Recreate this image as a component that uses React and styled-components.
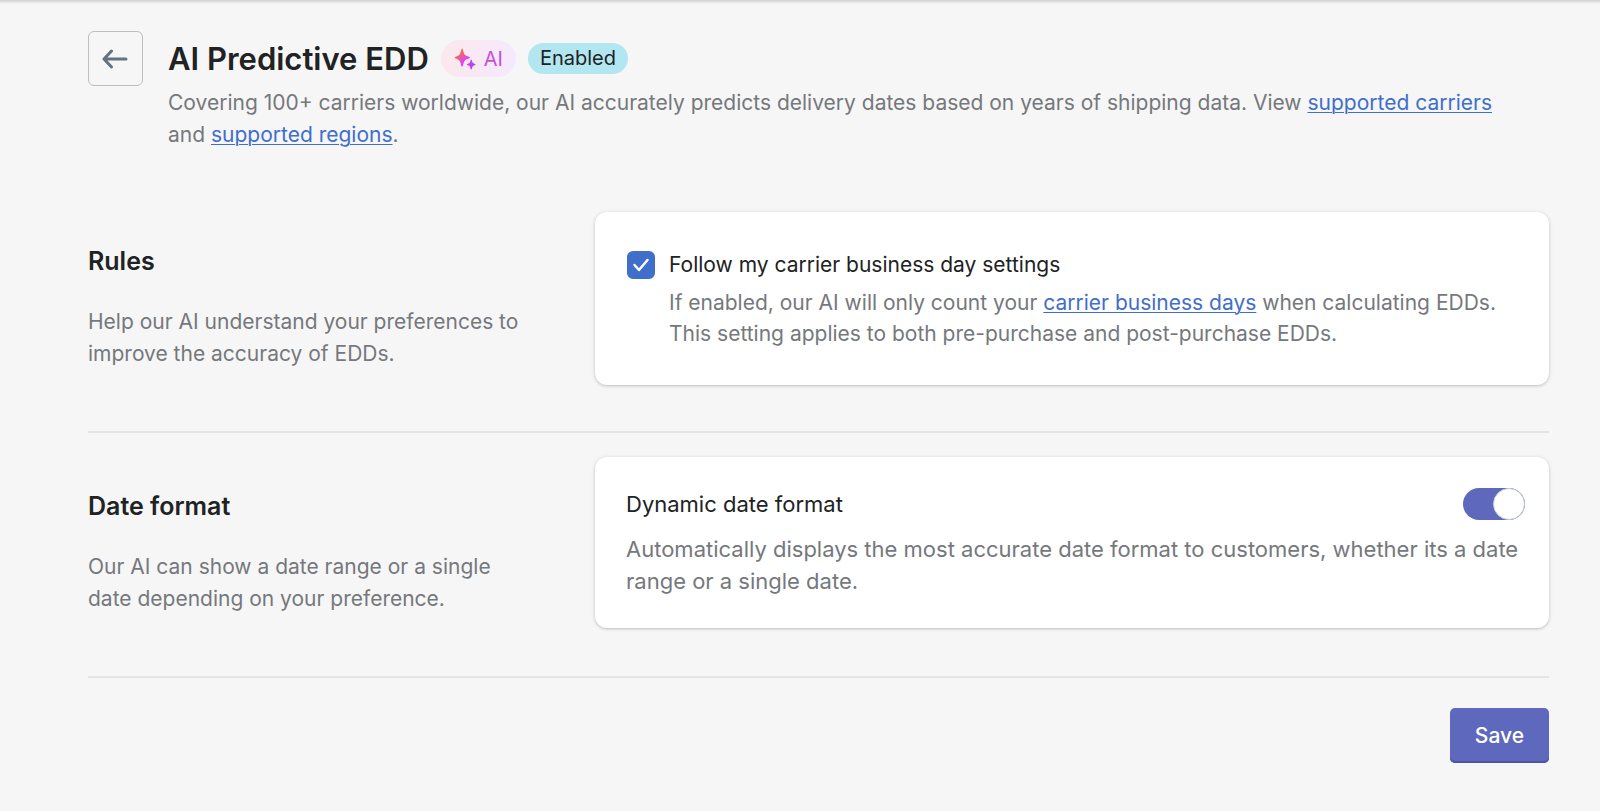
import { useState } from 'react'
import styled, { createGlobalStyle } from 'styled-components'

const GlobalStyle = createGlobalStyle`
    *, *::before {
        box-sizing: border-box;
    }

    body {
        margin: 0;
        background: #f6f6f6;
        color: #202223;
        font-family: Inter, "Liberation Sans", sans-serif;
        font-size: 21px;
        line-height: 32px;
    }

    h1, h2, p {
        margin: 0;
    }
`;

const Page = styled.main`
    min-height: 100vh;
    padding: 31px 51px 46px 88px;
    background: linear-gradient(#d2d2d2, #f6f6f6) top / 100% 4px no-repeat;
`;

const Header = styled.header`
    display: flex;
    align-items: flex-start;
    gap: 25px;
    margin-bottom: 61px;
    padding-right: 24px;
`;

const BackButton = styled.button`
    display: flex;
    align-items: center;
    justify-content: center;
    flex: none;
    width: 55px;
    height: 55px;
    padding: 0;
    border: 1px solid #babfc3;
    border-radius: 6px;
    background: transparent;
    cursor: pointer;
`;

const TitleRow = styled.div`
    display: flex;
    align-items: center;
    gap: 12px;
    height: 55px;
    margin-bottom: 1px;
`;

const Title = styled.h1`
    font-size: 31px;
    font-weight: 600;
    line-height: 40px;
`;

const AiBadge = styled.span`
    display: flex;
    align-items: center;
    gap: 8px;
    height: 37px;
    padding: 0 13px;
    border-radius: 19px;
    background: linear-gradient(90deg, #fae8ec, #f6e9fe);
    color: #c84fd8;
    font-size: 20px;
`;

const StatusBadge = styled.span`
    height: 31px;
    padding: 0 12px;
    border-radius: 16px;
    background: #b2e6f0;
    font-size: 20px;
    line-height: 31px;
`;

const Text = styled.p`
    color: #75787c;
`;

const Link = styled.a`
    color: #3f6ecb;
    text-decoration: underline;
    text-decoration-thickness: 1px;
    text-underline-offset: 2px;
`;

const Section = styled.section`
    display: grid;
    grid-template-columns: minmax(0, 1fr) minmax(0, 2fr);
    align-items: start;
    gap: 30px;
    min-height: 221px;
    margin-bottom: 24px;
    padding-bottom: 44px;
    border-bottom: 2px solid #e3e4e6;
`;

const Annotation = styled.div`
    display: flex;
    flex-direction: column;
    gap: 29px;
    padding: 33px 36px 0 0;
`;

const SectionTitle = styled.h2`
    font-size: 25px;
    font-weight: 600;
    line-height: 32px;
`;

const Card = styled.div`
    padding: 31px 24px 31px 31px;
    border-radius: 12px;
    background: #fff;
    box-shadow: 0 1px 3px rgba(0, 0, 0, 0.2), 0 0 6px rgba(0, 0, 0, 0.05);
    font-size: ${(props) => (props.$large ? '22px' : '21px')};
`;

const CheckRow = styled.div`
    display: grid;
    grid-template-columns: 29px 1fr;
    column-gap: 14px;
    row-gap: 6px;
    align-items: center;
    padding: 6px 0 5px;
`;

const CheckBox = styled.span`
    position: relative;
    display: flex;
    justify-self: end;
    width: 28px;
    height: 28px;

    svg {
        position: absolute;
        inset: 0;
        pointer-events: none;
    }
`;

const CheckInput = styled.input`
    appearance: none;
    width: 28px;
    height: 28px;
    margin: 0;
    border: 2px solid #8c9196;
    border-radius: 6px;
    cursor: pointer;

    &:checked {
        border-color: #3f6ecb;
        background: #3f6ecb;
    }
`;

const HelpText = styled(Text)`
    grid-column: 2;
    line-height: 31px;
`;

const SwitchRow = styled.div`
    display: flex;
    align-items: center;
    justify-content: space-between;
    margin-bottom: 13px;
`;

const Switch = styled.input`
    appearance: none;
    display: flex;
    width: 62px;
    height: 32px;
    margin: 0;
    border-radius: 16px;
    background: #babfc3;
    cursor: pointer;

    &::before {
        content: '';
        width: 32px;
        height: 32px;
        border: 1px solid #c4cad3;
        border-radius: 50%;
        background: #fff;
    }

    &:checked {
        justify-content: flex-end;
        background: #5e68bd;
    }
`;

const Footer = styled.footer`
    display: flex;
    justify-content: flex-end;
    padding-top: 6px;
`;

const SaveButton = styled.button`
    height: 55px;
    padding: 0 25px;
    border: 0;
    border-radius: 5px;
    background: #5e68bd;
    box-shadow: inset 0 -2px 0 #4e56a3;
    color: #fff;
    font: 500 21px/32px Inter, "Liberation Sans", sans-serif;
    cursor: pointer;
`;

function ArrowIcon() {
    return (
        <svg width="27" height="20" viewBox="0 0 27 20" fill="none" stroke="#637381" strokeWidth="3" strokeLinecap="round" strokeLinejoin="round" aria-hidden="true">
            <path d="M24 10H2.5M9.5 2L2 10L9.5 18" />
        </svg>
    )
}

function SparkleIcon() {
    return (
        <svg width="22" height="24" viewBox="0 0 23 24" aria-hidden="true">
            <defs>
                <linearGradient id="sparkle" x1="2" y1="3" x2="20" y2="22" gradientUnits="userSpaceOnUse">
                    <stop offset="0.15" stopColor="#ee7047" />
                    <stop offset="0.5" stopColor="#e246e8" />
                    <stop offset="1" stopColor="#a545ee" />
                </linearGradient>
            </defs>
            <path fill="url(#sparkle)" d="M8.5 1C9.6 1 9.7 5.2 11.2 7.3C13 9.3 17 9.5 17 10.5C17 11.5 13 11.7 11.2 13.7C9.7 15.8 9.6 20 8.5 20C7.4 20 7.3 15.8 5.8 13.7C4 11.7 0.5 11.5 0.5 10.5C0.5 9.5 4 9.3 5.8 7.3C7.3 5.2 7.4 1 8.5 1Z" />
            <path fill="url(#sparkle)" d="M18 12.5C18.8 12.5 18.8 14.8 19.6 15.8C20.5 16.8 22.5 16.9 22.5 17.7C22.5 18.5 20.5 18.6 19.6 19.6C18.8 20.6 18.8 23 18 23C17.2 23 17.2 20.6 16.4 19.6C15.5 18.6 13.5 18.5 13.5 17.7C13.5 16.9 15.5 16.8 16.4 15.8C17.2 14.8 17.2 12.5 18 12.5Z" />
        </svg>
    )
}

function App() {
    const [followCarrier, setFollowCarrier] = useState(true)
    const [dynamicFormat, setDynamicFormat] = useState(true)

    return (
        <>
            <GlobalStyle />
            <Page>
                <Header>
                    <BackButton type="button" aria-label="Back">
                        <ArrowIcon />
                    </BackButton>
                    <div>
                        <TitleRow>
                            <Title>AI Predictive EDD</Title>
                            <AiBadge><SparkleIcon />AI</AiBadge>
                            <StatusBadge>Enabled</StatusBadge>
                        </TitleRow>
                        <Text>
                            Covering 100+ carriers worldwide, our AI accurately predicts delivery dates based on years of shipping data. View{' '}
                            <Link href="#carriers">supported carriers</Link> and <Link href="#regions">supported regions</Link>.
                        </Text>
                    </div>
                </Header>

                <Section>
                    <Annotation>
                        <SectionTitle>Rules</SectionTitle>
                        <Text>Help our AI understand your preferences to improve the accuracy of EDDs.</Text>
                    </Annotation>
                    <Card>
                        <CheckRow>
                            <CheckBox>
                                <CheckInput
                                    id="follow"
                                    type="checkbox"
                                    checked={followCarrier}
                                    onChange={(event) => setFollowCarrier(event.target.checked)}
                                />
                                {followCarrier && (
                                    <svg width="28" height="28" viewBox="0 0 28 28" fill="none" stroke="#fff" strokeWidth="2.5" strokeLinecap="round" strokeLinejoin="round" aria-hidden="true">
                                        <path d="M7.5 14L12 19L20.5 9" />
                                    </svg>
                                )}
                            </CheckBox>
                            <label htmlFor="follow">Follow my carrier business day settings</label>
                            <HelpText>
                                If enabled, our AI will only count your <Link href="#business-days">carrier business days</Link> when calculating EDDs. This setting applies to both pre-purchase and post-purchase EDDs.
                            </HelpText>
                        </CheckRow>
                    </Card>
                </Section>

                <Section>
                    <Annotation>
                        <SectionTitle>Date format</SectionTitle>
                        <Text>Our AI can show a date range or a single date depending on your preference.</Text>
                    </Annotation>
                    <Card $large>
                        <SwitchRow>
                            <label htmlFor="dynamic">Dynamic date format</label>
                            <Switch
                                id="dynamic"
                                type="checkbox"
                                role="switch"
                                checked={dynamicFormat}
                                onChange={(event) => setDynamicFormat(event.target.checked)}
                            />
                        </SwitchRow>
                        <Text>Automatically displays the most accurate date format to customers, whether its a date range or a single date.</Text>
                    </Card>
                </Section>

                <Footer>
                    <SaveButton type="button">Save</SaveButton>
                </Footer>
            </Page>
        </>
    )
}

export default App
